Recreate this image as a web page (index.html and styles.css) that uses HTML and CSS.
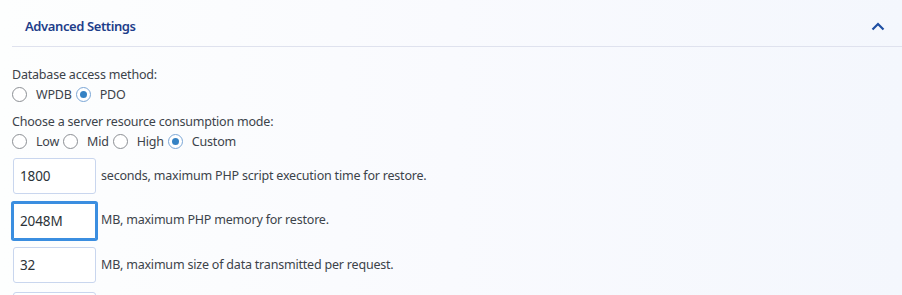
FILE: index.html
```html
<!DOCTYPE html>
<html lang="en">
<head>
<meta charset="utf-8">
<title>Advanced Settings</title>
<link rel="stylesheet" href="styles.css">
</head>
<body>
<div class="panel">
  <div class="panel-header">
    <span class="panel-title">Advanced Settings</span>
    <svg class="chevron" width="14" height="9" viewBox="0 0 14 9"><path d="M1.5 7.5 L7 2 L12.5 7.5" fill="none" stroke="#1f4fa3" stroke-width="2.2"/></svg>
  </div>
  <div class="panel-body">
    <div class="field-label">Database access method:</div>
    <div class="radio-row">
      <span class="radio"></span><span class="radio-label">WPDB</span>
      <span class="radio checked"></span><span class="radio-label">PDO</span>
    </div>
    <div class="field-label second">Choose a server resource consumption mode:</div>
    <div class="radio-row">
      <span class="radio"></span><span class="radio-label">Low</span>
      <span class="radio"></span><span class="radio-label">Mid</span>
      <span class="radio"></span><span class="radio-label">High</span>
      <span class="radio checked"></span><span class="radio-label">Custom</span>
    </div>
    <div class="inputs">
      <div class="input-row"><div class="text-input">1800</div><span class="input-note">seconds, maximum PHP script execution time for restore.</span></div>
      <div class="input-row"><div class="text-input focused">2048M</div><span class="input-note">MB, maximum PHP memory for restore.</span></div>
      <div class="input-row"><div class="text-input">32</div><span class="input-note">MB, maximum size of data transmitted per request.</span></div>
      <div class="input-row"><div class="text-input"></div><span class="input-note"></span></div>
    </div>
  </div>
</div>
</body>
</html>
```
FILE: styles.css
```css
html, body {
  margin: 0;
  padding: 0;
}
body {
  width: 902px;
  height: 295px;
  overflow: hidden;
  background: linear-gradient(90deg, #fdfefe 0%, #f9fafe 50%, #f4f7fd 100%);
  font-family: "Noto Sans", "Open Sans", sans-serif;
  font-size: 12.5px;
  letter-spacing: -0.2px;
  color: #3c434a;
}
.panel {
  margin-left: 12px;
}
.panel-header {
  box-sizing: border-box;
  height: 47px;
  display: flex;
  align-items: center;
  justify-content: space-between;
  padding: 5px 17px 0 13px;
  border-bottom: 1px solid #dfe2ee;
}
.panel-title {
  font-size: 13px;
  font-weight: 600;
  letter-spacing: -0.4px;
  color: #1e3d8a;
}
.chevron {
  display: block;
  margin-top: 1px;
}
.panel-body {
  padding-top: 19px;
}
.field-label {
  line-height: 18px;
}
.field-label.second {
  margin-top: 10px;
}
.radio-row {
  display: flex;
  align-items: center;
  height: 18px;
  margin-top: 1px;
}
.radio {
  width: 13px;
  height: 13px;
  border: 1px solid #8c8f94;
  border-radius: 50%;
  background: #fff;
  margin-right: 9px;
  position: relative;
  flex: none;
}
.radio.checked {
  border-color: #7aa6d6;
}
.radio.checked::after {
  content: "";
  position: absolute;
  left: 3px;
  top: 3px;
  width: 7px;
  height: 7px;
  border-radius: 50%;
  background: #3582c4;
}
.radio-label {
  margin-right: 4px;
}
.inputs {
  margin-top: 8px;
  display: flex;
  flex-direction: column;
  gap: 8.5px;
}
.input-row {
  display: flex;
  align-items: center;
  margin-left: 1px;
}
.text-input {
  box-sizing: border-box;
  width: 83px;
  height: 36px;
  border: 1px solid #c9d6ee;
  border-radius: 3px;
  background: #fff;
  padding-left: 6px;
  display: flex;
  align-items: center;
  font-size: 13.5px;
  letter-spacing: -0.1px;
  color: #2c3338;
  flex: none;
}
.text-input.focused {
  border: 1px solid #3b8ee0;
  border-radius: 1px;
  box-shadow: 0 0 0 2px #3b8ee0;
}
.input-note {
  margin-left: 5px;
  margin-top: -2px;
}
```
